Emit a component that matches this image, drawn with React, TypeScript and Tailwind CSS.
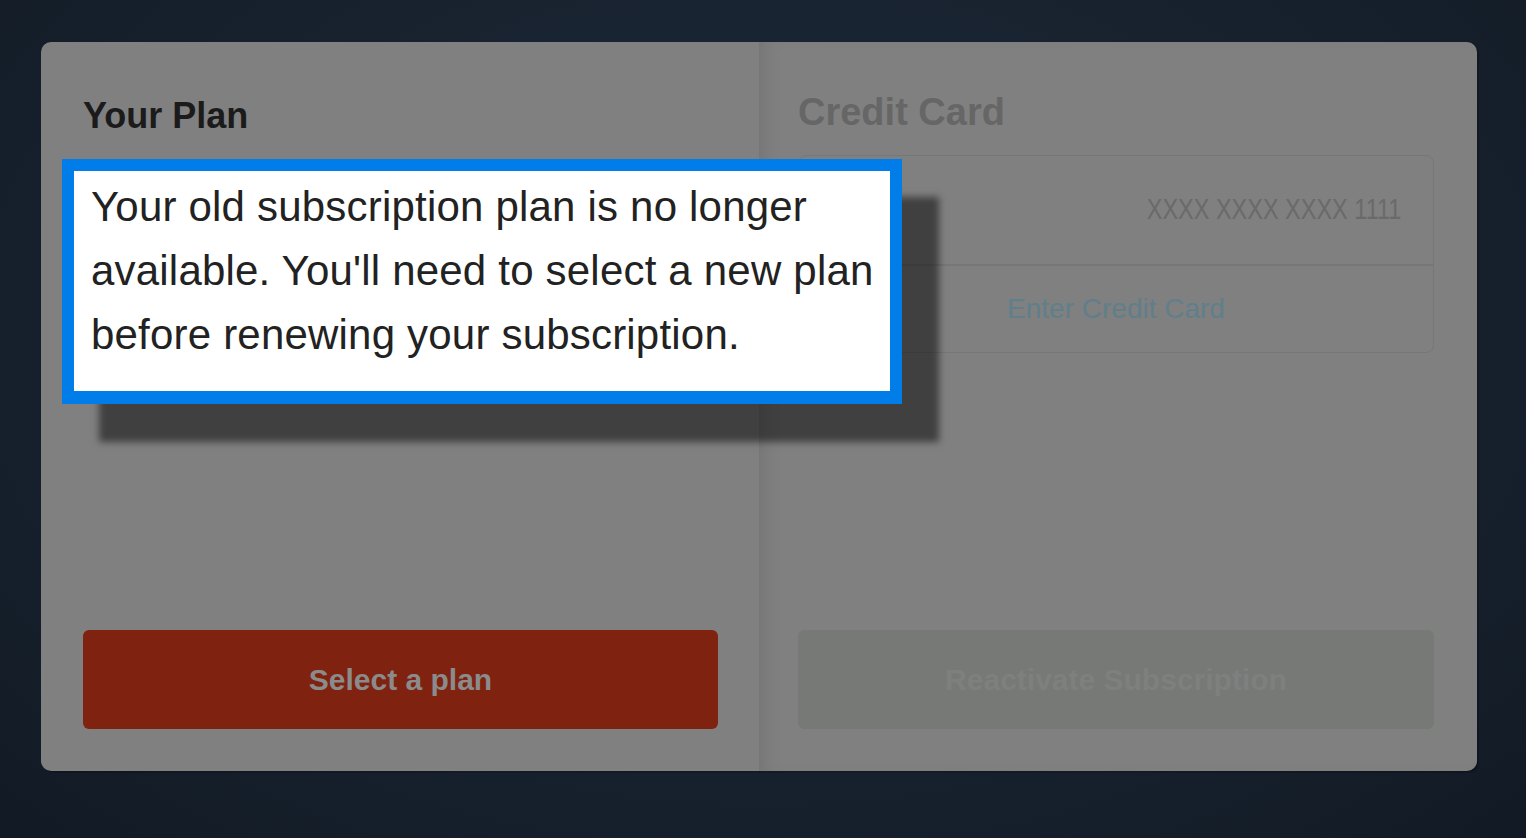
export default function App() {
  return (
    <div className="min-h-[838px] w-full bg-[radial-gradient(ellipse_at_50%_40%,#1d2b3c_0%,#18222f_55%,#111a24_100%)] pt-[42px] pl-[41px] font-['Liberation_Sans',Arial,sans-serif]">
      {/* ── Dimmed card ── */}
      <div className="relative grid h-[729px] w-[1436px] grid-cols-2 rounded-[10px] bg-[#808080] shadow-[2px_2px_0_0_rgba(0,0,0,0.18)]">
        {/* Your Plan */}
        <div className="flex flex-col pt-[56px] pr-[41px] pb-[42px] pl-[42px]">
          <h2 className="text-[36px] leading-none font-bold text-[#1b1b1b]">Your Plan</h2>
          <button className="mt-auto h-[99px] w-full rounded-[6px] bg-[#7f2310] text-[30px] font-bold text-[#8b8b8b]">
            Select a plan
          </button>
        </div>

        {/* Credit Card */}
        <div className="flex flex-col pt-[51px] pr-[43px] pb-[42px] pl-[39px] shadow-[inset_14px_0_22px_-14px_rgba(0,0,0,0.14)]">
          <h2 className="text-[38px] leading-none font-bold text-[#666666]">Credit Card</h2>
          <div className="mt-[24px] rounded-[8px] border border-[#777777]">
            <div className="flex h-[110px] items-center justify-end border-b-2 border-[#777777] pr-[32px]">
              <span className="inline-block origin-right scale-x-[0.81] text-[29px] whitespace-nowrap text-[#6a6a6a]">
                XXXX XXXX XXXX 1111
              </span>
            </div>
            <div className="flex h-[86px] items-center justify-center">
              <span className="text-[28px] text-[#5f7f8a]">Enter Credit Card</span>
            </div>
          </div>
          <button className="mt-auto h-[99px] w-full rounded-[6px] bg-[#777977] text-[30px] font-bold text-[#7f7f7f]">
            Reactivate Subscription
          </button>
        </div>

        {/* ── Tooltip ── */}
        <div className="absolute top-[117px] left-[21px] h-[245px] w-[840px] border-[12px] border-b-[13px] border-[#007de8] bg-white shadow-[37px_38px_7px_0_rgba(0,0,0,0.5)]">
          <p className="pt-[4px] pl-[17px] text-[42px] leading-[64px] tracking-[0.2px] text-[#222222]">
            Your old subscription plan is no longer
            <br />
            available. You'll need to select a new plan
            <br />
            before renewing your subscription.
          </p>
        </div>
      </div>
    </div>
  )
}
